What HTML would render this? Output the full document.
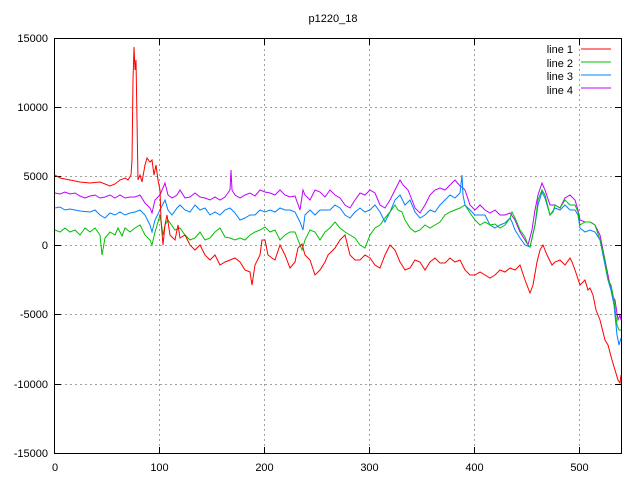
<!DOCTYPE html>
<html><head><style>body{margin:0;background:#fff}svg{display:block}text{font-family:"Liberation Sans",sans-serif;font-size:11px;fill:#000}</style></head>
<body>
<svg width="640" height="480" viewBox="0 0 640 480">
<g stroke="#a0a0a0" stroke-width="1" stroke-dasharray="2,3">
<line x1="55" y1="107.5" x2="621" y2="107.5"/><line x1="55" y1="176.5" x2="621" y2="176.5"/><line x1="55" y1="245.5" x2="621" y2="245.5"/><line x1="55" y1="314.5" x2="621" y2="314.5"/><line x1="55" y1="384.5" x2="621" y2="384.5"/>
<line x1="159.5" y1="39" x2="159.5" y2="453"/><line x1="264.5" y1="39" x2="264.5" y2="453"/><line x1="369.5" y1="39" x2="369.5" y2="453"/><line x1="474.5" y1="39" x2="474.5" y2="453"/><line x1="579.5" y1="39" x2="579.5" y2="453"/>
</g>
<g stroke="#000" stroke-width="1">
<rect x="54.5" y="38.5" width="567" height="415" fill="none"/>
<path d="M55 38.5h6M55 107.5h6M55 176.5h6M55 245.5h6M55 314.5h6M55 384.5h6M55 453.5h6M621 38.5h-6M621 107.5h-6M621 176.5h-6M621 245.5h-6M621 314.5h-6M621 384.5h-6M621 453.5h-6M159.5 453v-6M264.5 453v-6M369.5 453v-6M474.5 453v-6M579.5 453v-6M159.5 39v6M264.5 39v6M369.5 39v6M474.5 39v6M579.5 39v6"/>
</g>
<g text-anchor="end">
<text x="48" y="42">15000</text><text x="48" y="111">10000</text><text x="48" y="180">5000</text><text x="48" y="249">0</text><text x="48" y="318">-5000</text><text x="48" y="388">-10000</text><text x="48" y="457">-15000</text>
</g>
<g text-anchor="middle">
<text x="55" y="471">0</text><text x="159.5" y="471">100</text><text x="264.5" y="471">200</text><text x="369.5" y="471">300</text><text x="474.5" y="471">400</text><text x="579.5" y="471">500</text>
<text x="333" y="22">p1220_18</text>
</g>
<g text-anchor="end">
<text x="573" y="53">line 1</text><text x="573" y="67">line 2</text><text x="573" y="80">line 3</text><text x="573" y="94">line 4</text>
</g>
<path d="M581 49h30" stroke="#f00"/><path d="M581 62h30" stroke="#00c000"/><path d="M581 75h30" stroke="#0080ff"/><path d="M581 88h30" stroke="#c000ff"/>
<g fill="none" stroke-width="1">
<polyline stroke="#c000ff" points="55,193 60,194 65,192 70,194 75,193 80,196 85,198 90,196 95,195 100,198 105,197 110,195 115,198 120,195 125,198 130,197 135,197 140,195 145,203 150,208 152,213 155,200 160,195 165,183 168,195 172,198 177,195 180,190 185,198 190,197 195,193 200,197 205,198 210,200 215,197 220,200 225,197 230,190 231,170 232,190 235,195 240,198 245,195 250,193 255,196 260,190 265,192 270,193 275,195 280,190 285,195 290,197 295,196 300,210 303,190 305,195 310,200 315,190 320,192 325,197 330,190 335,195 340,198 345,205 350,208 355,200 360,193 365,195 370,190 375,193 380,205 385,208 390,200 395,190 400,180 403,185 408,190 412,200 415,208 420,213 425,205 430,195 435,190 440,188 445,190 450,185 455,180 460,186 463,188 465,190 470,205 475,210 480,205 485,210 490,213 495,210 500,215 505,215 510,213 515,220 520,232 525,240 528,245 532,230 535,210 538,195 542,183 545,190 550,205 555,205 560,208 565,198 570,195 575,200 578,210 580,220 585,222 590,222 595,225 600,235 603,250 606,265 609,280 612,295 615,300 618,320 620,315 621,320"/>
<polyline stroke="#0080ff" points="55,208 60,207 65,210 70,209 80,211 90,212 95,210 100,215 105,218 110,213 115,215 120,212 125,215 130,213 135,212 140,210 145,215 150,225 152,232 155,220 160,210 165,200 168,210 172,215 177,208 180,205 185,210 190,212 195,205 200,210 205,208 210,215 215,212 220,215 225,210 230,208 235,213 240,220 245,218 250,215 255,215 260,210 265,212 270,210 275,212 280,208 285,210 290,210 295,212 300,222 303,230 305,215 310,210 315,215 320,210 325,210 330,210 335,205 340,208 345,215 350,218 355,212 360,208 365,212 370,210 375,205 380,212 385,222 390,212 395,200 400,195 405,205 410,200 415,212 420,218 425,215 430,210 435,212 440,205 445,200 450,195 455,198 460,193 462,175 463,195 465,205 470,210 475,215 480,215 485,215 490,225 495,228 500,225 505,223 510,218 512,222 515,230 520,238 525,245 530,247 535,225 538,205 542,192 545,198 550,215 555,208 560,210 565,205 570,210 575,210 578,215 580,228 585,232 590,230 595,232 600,240 605,265 608,280 611,290 614,305 617,335 619,345 621,338"/>
<polyline stroke="#00c000" points="55,230 60,232 65,228 70,232 75,230 80,235 85,228 90,232 95,228 100,235 102,255 105,238 110,232 115,235 118,228 122,236 125,228 130,232 135,228 140,225 145,235 150,240 152,245 155,232 158,222 160,215 163,235 165,225 168,220 175,230 180,228 185,235 190,240 195,238 200,232 205,240 210,238 215,232 220,228 225,237 230,238 235,240 240,238 245,240 250,235 255,232 260,230 265,227 270,232 275,230 280,240 285,235 290,232 295,232 300,245 302,250 305,240 310,230 315,232 320,240 325,232 330,228 335,222 340,228 345,232 350,235 355,238 360,245 365,248 370,235 375,228 380,225 385,218 390,212 395,205 398,210 402,212 405,220 410,228 415,232 420,230 425,225 430,228 435,225 440,222 445,215 450,212 455,210 460,208 465,205 470,213 475,220 480,225 485,222 490,225 495,224 500,228 505,225 510,218 512,212 515,218 520,230 525,237 528,245 530,247 535,225 538,200 542,190 545,195 550,215 553,212 555,205 560,208 565,200 570,205 575,205 578,212 580,225 585,222 590,222 595,225 600,240 605,260 608,280 611,285 614,300 617,325 619,330 621,330"/>
<polyline stroke="#f00" points="55,175 60,178 70,180 80,182 90,183 100,182 110,186 115,184 120,180 125,178 128,180 131,175 132,160 133,80 134,47 135,70 136,60 137,120 138,180 140,175 142,182 145,165 147,158 150,162 152,160 154,175 156,165 158,180 160,190 161,220 163,245 165,225 167,215 170,235 175,240 178,225 180,238 185,235 190,245 195,250 200,245 205,255 210,260 215,255 220,265 225,262 230,260 235,258 240,262 245,270 250,272 252,285 255,265 260,255 262,240 265,240 268,255 272,258 275,260 280,245 285,255 290,268 295,262 298,248 302,244 305,255 310,260 315,275 320,270 325,262 328,255 335,248 340,240 345,235 350,255 355,260 360,260 365,255 370,258 375,265 380,268 385,255 390,245 395,250 400,262 402,265 405,270 410,268 415,260 420,262 425,270 430,262 435,258 440,263 445,263 450,258 455,262 460,260 465,270 470,275 475,275 480,272 485,275 490,278 495,275 500,270 505,272 510,268 515,270 520,265 525,280 530,293 533,285 537,262 540,250 543,245 547,255 552,265 555,262 560,260 565,265 570,258 572,262 575,270 580,285 585,280 588,290 590,288 593,295 596,310 600,320 605,340 608,345 612,360 615,370 618,380 620,383 621,375"/>
</g>
</svg>
</body></html>
